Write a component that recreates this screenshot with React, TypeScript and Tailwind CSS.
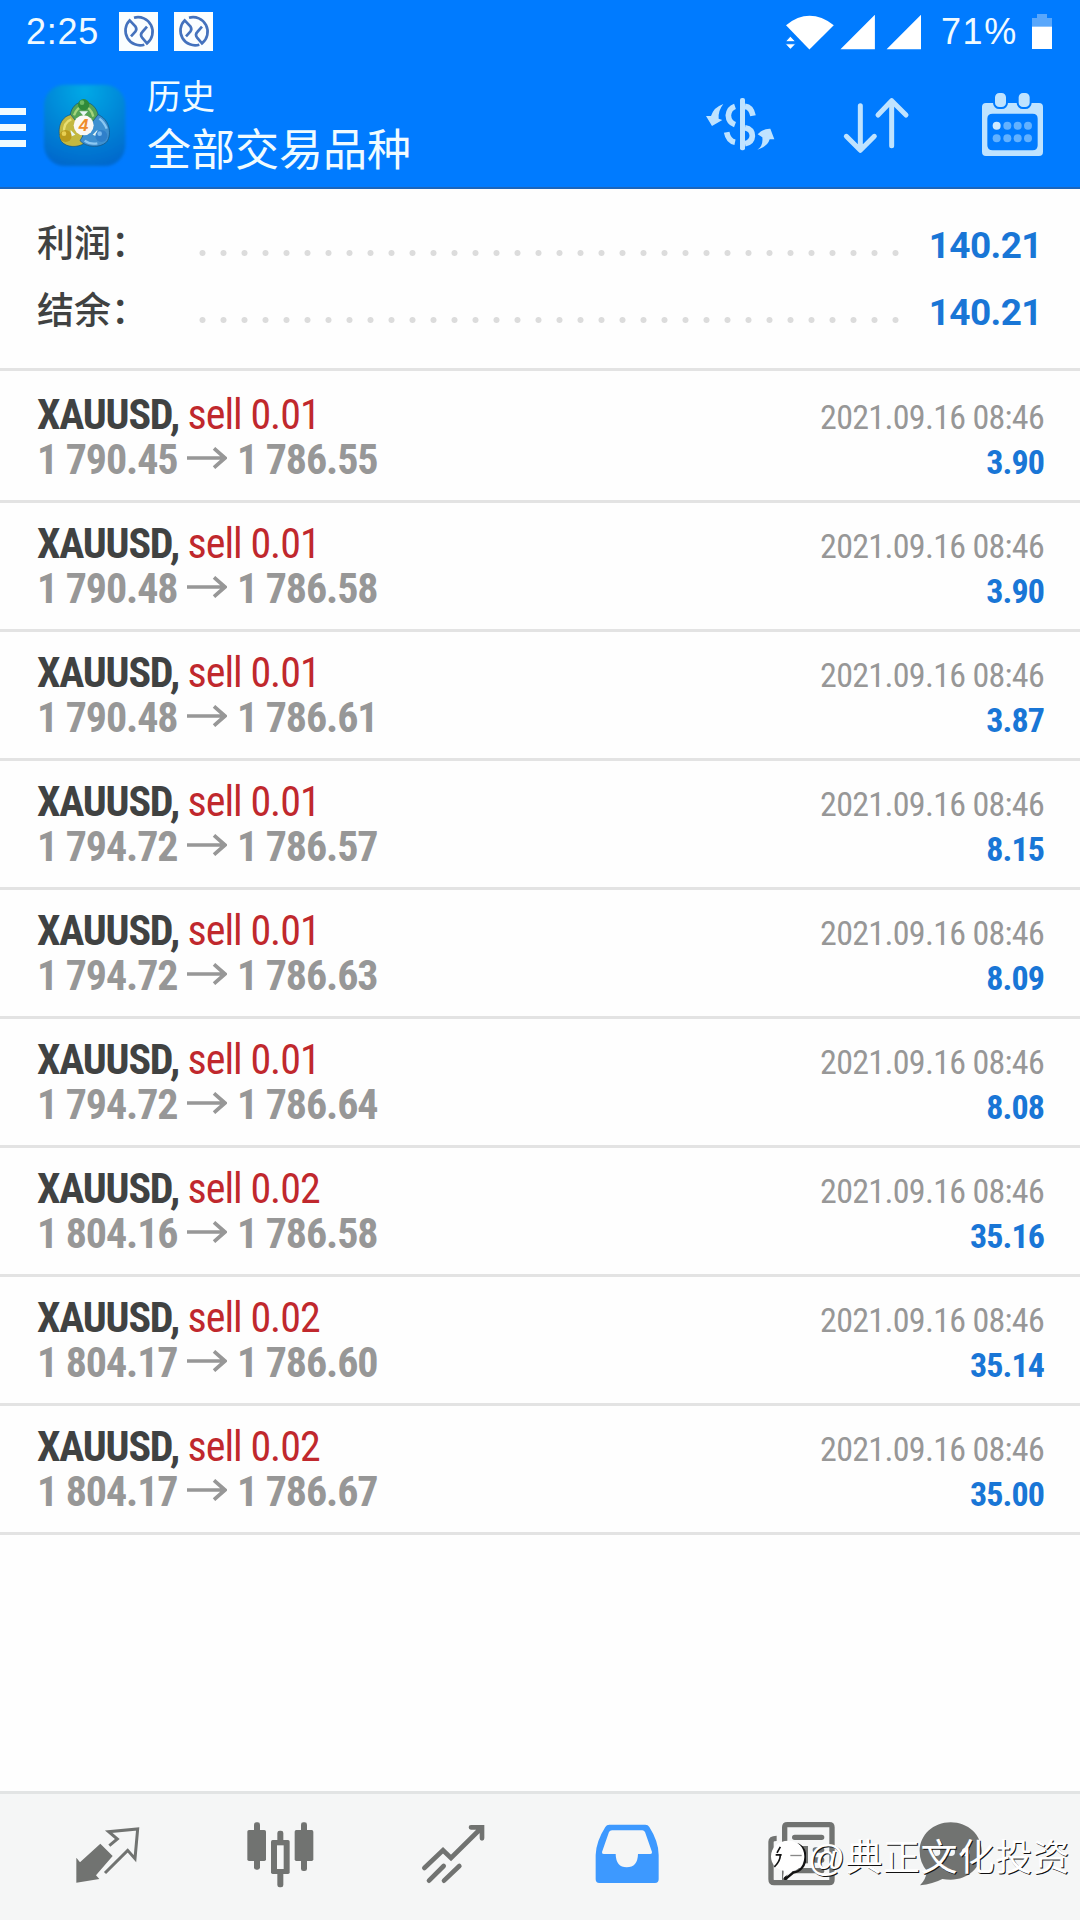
const deals = [
  { volume: '0.01', open: '1 790.45', close: '1 786.55', profit: '3.90' },
  { volume: '0.01', open: '1 790.48', close: '1 786.58', profit: '3.90' },
  { volume: '0.01', open: '1 790.48', close: '1 786.61', profit: '3.87' },
  { volume: '0.01', open: '1 794.72', close: '1 786.57', profit: '8.15' },
  { volume: '0.01', open: '1 794.72', close: '1 786.63', profit: '8.09' },
  { volume: '0.01', open: '1 794.72', close: '1 786.64', profit: '8.08' },
  { volume: '0.02', open: '1 804.16', close: '1 786.58', profit: '35.16' },
  { volume: '0.02', open: '1 804.17', close: '1 786.60', profit: '35.14' },
  { volume: '0.02', open: '1 804.17', close: '1 786.67', profit: '35.00' },
];

function NotificationIcon() {
  return (
    <svg viewBox="0 0 117 117" className="size-[39px]">
      <rect width="117" height="117" fill="#fafeff" />
      <g fill="none" stroke="#4472bd" strokeWidth="8">
        <path d="M45 17 A44 44 0 0 1 84 94 L70 78 Q62 68 70 60 L84 44" />
        <path d="M76 98 A44 44 0 0 1 32 25 L49 43 Q55 52 49 59 L36 73" />
      </g>
    </svg>
  );
}

function StatusBar() {
  return (
    <div className="flex h-[63px] items-center pl-[26px] pr-[28px] font-['Liberation_Sans',sans-serif] text-[36px] text-[#f0faff]">
      <span className="mt-px w-[93px] tracking-[0.7px]">2:25</span>
      <div className="flex gap-4">
        <NotificationIcon />
        <NotificationIcon />
      </div>
      <svg viewBox="315 30 410 125" className="ml-auto h-[42px] w-[137px]" fill="#fff">
        <path d="M321 72 Q391 16 464 72 L391 145 Z" />
        <path d="M318 122 L334 104 L351 122 Z M318 128 L334 145 L351 128 Z" stroke="#007bff" strokeWidth="3" />
        <path d="M484 144 L587 41 V144 Z M622 144 L725 41 V144 Z" />
      </svg>
      <span className="ml-[20px] mt-px w-[91px] tracking-[1.6px]">71%</span>
      <svg viewBox="0 0 60 105" className="h-[35px] w-5">
        <path d="M0 12 H15 V0 H45 V12 H60 V40 H0 Z" fill="#59a7fb" />
        <rect y="38" width="60" height="67" fill="#fff" />
      </svg>
    </div>
  );
}

function AppLogo() {
  return (
    <svg viewBox="0 0 270 270" className="h-[90px] w-[90px]">
      <defs>
        <radialGradient id="tile" cx="50%" cy="8%" r="95%">
          <stop offset="0" stopColor="#04a9e6" />
          <stop offset="0.5" stopColor="#0488d8" />
          <stop offset="1" stopColor="#0268cc" />
        </radialGradient>
        <filter id="soft"><feGaussianBlur stdDeviation="5" /></filter>
      </defs>
      <rect x="12" y="14" width="244" height="244" rx="62" fill="url(#tile)" filter="url(#soft)" />
      <g stroke="#12507c" strokeWidth="2">
        <path d="M131 66 C98 66 84 100 92 134 L131 146 L174 134 C182 100 164 66 131 66 Z" fill="#55a355" />
        <path d="M92 104 C58 112 50 154 64 184 C80 204 112 202 130 192 L126 146 Z" fill="#c3b840" />
        <path d="M174 104 C206 116 218 160 200 186 C178 206 138 202 120 182 L140 148 Z" fill="#3f90d0" />
      </g>
      <path d="M102 106 Q112 80 131 80 Q152 80 160 110" fill="none" stroke="#a4d47c" strokeWidth="7" />
      <path d="M72 160 Q70 126 94 118" fill="none" stroke="#e9df72" strokeWidth="7" />
      <path d="M200 146 Q192 126 178 116 M134 182 Q150 194 172 190" fill="none" stroke="#8cc8f2" strokeWidth="7" />
      <path d="M118 94 L144 94 L131 108 Z M92 150 L106 164 L92 170 Z M172 150 L158 164 L172 170 Z" fill="#e8f6f4" />
      <circle cx="131" cy="74" r="17" fill="#2f8a3a" />
      <circle cx="126" cy="68" r="7" fill="#6cba64" />
      <circle cx="77" cy="168" r="18" fill="#b99a1c" />
      <circle cx="72" cy="161" r="7" fill="#e8cf52" />
      <circle cx="184" cy="168" r="18" fill="#2f7fca" />
      <circle cx="179" cy="161" r="7" fill="#78b8ee" />
      <circle cx="131" cy="136" r="30" fill="#fbf8f4" />
      <text x="131" y="154" textAnchor="middle" fontSize="52" fontWeight="700" fontStyle="italic" fontFamily="Liberation Sans, sans-serif" fill="#ef8c2c">4</text>
    </svg>
  );
}

function CurrencyIcon() {
  return (
    <svg viewBox="0 0 270 240" className="h-20 w-[90px]" fill="#bfe3ff">
      <rect x="120" y="39" width="15" height="157" rx="6" />
      <g fill="none" stroke="#bfe3ff" strokeWidth="17">
        <path d="M105 64 Q87 70 85 91 Q86 112 105 119" />
        <path d="M135 64 Q154 66 159 92" />
        <path d="M80 142 Q85 168 105 172" />
        <path d="M135 128 Q157 132 157 153 Q156 172 135 176" />
      </g>
      <path d="M18 93 L33 93 Q42 66 70 57 Q54 77 56 101 L67 105 L36 123 Z" />
      <path d="M172 194 Q190 183 187 157 L173 148 Q190 130 211 131 L223 163 L209 163 Q203 185 172 194 Z" />
    </svg>
  );
}

function SortIcon() {
  return (
    <svg viewBox="480 255 216 240" className="h-20 w-[72px]" fill="none" stroke="#bfe3ff" strokeWidth="15" strokeLinecap="round" strokeLinejoin="round">
      <path d="M541 317 V450 M499 409 L541 451 L583 409" />
      <path d="M635 437 V302 M594 345 L635 302 L678 345" />
    </svg>
  );
}

function CalendarIcon() {
  return (
    <svg viewBox="894 255 213 240" className="h-20 w-[71px]">
      <path fillRule="evenodd" fill="#bfe3ff" d="M918 309 H1077 Q1089 309 1089 321 V455 Q1089 468 1077 468 H918 Q906 468 906 455 V321 Q906 309 918 309 Z M938 341 Q922 341 922 356 V436 Q922 451 938 451 H1058 Q1073 451 1073 436 V356 Q1073 341 1058 341 Z" />
      <g fill="#bfe3ff" stroke="#007bff" strokeWidth="6">
        <rect x="942" y="276" width="39" height="48" rx="16" />
        <rect x="1013" y="276" width="39" height="48" rx="16" />
      </g>
      <circle cx="950" cy="377" r="12" fill="#cfeaff" />
      <g fill="#62b1ff">
        <circle cx="982" cy="377" r="12" />
        <circle cx="1013" cy="377" r="12" />
        <circle cx="1044" cy="377" r="12" />
        <circle cx="950" cy="415" r="12" />
        <circle cx="982" cy="415" r="12" />
        <circle cx="1013" cy="415" r="12" />
        <circle cx="1044" cy="415" r="12" />
      </g>
    </svg>
  );
}

function Header() {
  return (
    <header className="h-[189px] border-b-2 border-[#1b66bd] bg-[#007bff]">
      <StatusBar />
      <div className="flex h-[124px] items-center">
        <div className="mt-[5px] flex w-[26px] flex-col gap-[9px]">
          <div className="h-[7px] bg-[#f0fbff]" />
          <div className="h-[7px] bg-[#f0fbff]" />
          <div className="h-[7px] bg-[#f0fbff]" />
        </div>
        <div className="ml-[14px]">
          <AppLogo />
        </div>
        <div className="ml-[17px] pb-[3px] font-['Noto_Sans_CJK_SC',sans-serif] text-[#f0fbff]">
          <p className="text-[34px] leading-[47px]">历史</p>
          <p className="text-[44px] leading-[58px]">全部交易品种</p>
        </div>
        <div className="ml-auto flex pr-[31px]">
          <CurrencyIcon />
          <div className="ml-[50px]">
            <SortIcon />
          </div>
          <div className="ml-[66px]">
            <CalendarIcon />
          </div>
        </div>
      </div>
    </header>
  );
}

function SummaryRow({ label, value }: { label: string; value: string }) {
  return (
    <div className="flex h-[67px] items-center pl-[37px] pr-[38px]">
      <span className="w-[155px] pb-[5px] font-['Noto_Sans_CJK_SC',sans-serif] text-[37px] font-medium text-[#404242]">{label}</span>
      <div className="mt-[16px] h-2 w-[709px] bg-[radial-gradient(circle,#dcdcdc_2.5px,transparent_3.5px)] bg-[length:21px_8px]" />
      <span className="ml-auto mt-[2px] text-[37px] font-bold tracking-[-0.6px] text-[#1976d6]">{value}</span>
    </div>
  );
}

function DealRow({ deal }: { deal: (typeof deals)[number] }) {
  return (
    <li className="flex h-[129px] flex-col justify-end border-b-[3px] border-[#e3e3e3] pb-[18px] pl-[37px] pr-[36px] font-['Roboto_Condensed',Roboto,sans-serif] text-[42px] leading-[45px] first:h-[132px]">
      <div className="flex h-[45px] items-baseline justify-between">
        <p className="tracking-[-1px] text-[#c0282d]">
          <span className="font-bold tracking-[-1.2px] text-[#404242]">XAUUSD,</span> sell {deal.volume}
        </p>
        <p className="text-[34px] tracking-[-0.7px] text-[#979797]">2021.09.16 08:46</p>
      </div>
      <div className="flex h-[45px] items-baseline justify-between font-bold">
        <p className="flex items-baseline tracking-[-1.1px] text-[#979797]">
          <span className="w-[150px]">{deal.open}</span>
          <svg viewBox="0 0 120 66" className="mr-[10px] h-[22px] w-10 -translate-y-[5px]" fill="none" stroke="#979797" strokeWidth="11">
            <path d="M0 33 H114 M81 4 L114 33 L81 62" />
          </svg>
          <span>{deal.close}</span>
        </p>
        <p className="text-[34px] tracking-[-0.9px] text-[#1976d6]">{deal.profit}</p>
      </div>
    </li>
  );
}

function NavBar() {
  return (
    <nav className="flex h-[129px] border-t-[3px] border-[#e2e4e4] bg-[#f5f6f6] pl-[21px] pt-[26px]">
      <svg viewBox="64 120 519 210" className="h-[70px] w-[173px] shrink-0" fill="#717371">
        <path d="M230 233 L241 247 L302 191 L339 228 L289 286 L299 297 L230 308 Z" />
        <path d="M329 197 L353 177 L327 155 L414 147 L406 236 L384 211 L316 279" fill="none" stroke="#717371" strokeWidth="9" />
      </svg>
      <svg viewBox="581 120 519 210" className="h-[70px] w-[173px] shrink-0" fill="#717371">
        <rect x="761" y="127" width="18" height="142" rx="7" />
        <rect x="741" y="150" width="56" height="93" rx="5" />
        <rect x="902" y="127" width="18" height="146" rx="7" />
        <rect x="883" y="150" width="56" height="93" rx="5" />
        <rect x="831" y="152" width="18" height="170" rx="7" />
        <rect x="812" y="180" width="56" height="102" rx="5" />
        <rect x="830" y="196" width="20" height="71" fill="#f5f6f6" />
      </svg>
      <svg viewBox="21 120 519 210" className="h-[70px] w-[173px] shrink-0" fill="none" stroke="#717371" strokeWidth="14" strokeLinecap="round">
        <path d="M193 264 L249 211 L273 234 L364 144 M333 142 H366 V175" />
        <path d="M207 302 L251 258 M252 302 L298 258" />
      </svg>
      <svg viewBox="540 120 519 210" className="h-[70px] w-[173px] shrink-0">
        <path fillRule="evenodd" fill="#3d99ff" d="M748 134 H856 Q864 134 868 141 Q896 185 896 225 V298 Q896 309 885 309 H718 Q707 309 707 298 V225 Q708 185 736 141 Q740 134 748 134 Z M756 151 Q750 151 747 156 L726 216 Q725 222 731 222 H767 Q768 262 800 262 Q833 262 834 222 H871 Q877 222 876 216 L855 156 Q852 151 847 151 Z" />
      </svg>
      <svg viewBox="-21 120 519 210" className="h-[70px] w-[173px] shrink-0" fill="none" stroke="#717371" strokeWidth="16">
        <path d="M194 300 V142 Q194 134 202 134 H328 Q336 134 336 142 V300 Q336 308 328 308 H162 Q153 308 153 298 V185 Q153 175 170 175" />
        <path d="M224 172 H305 M286 210 H305 M286 240 H305 M224 272 H305" strokeLinecap="round" />
        <rect x="226" y="206" width="30" height="36" fill="#717371" />
      </svg>
      <svg viewBox="499 120 390 210" className="h-[70px] w-[130px] shrink-0" fill="#717371">
        <path d="M693 127 C745 127 786 165 786 213 C786 262 745 299 693 299 Q680 299 668 297 Q640 312 601 316 Q619 298 622 273 Q600 248 600 213 C600 165 641 127 693 127 Z" />
        <g fill="#f5f6f6">
          <circle cx="650" cy="216" r="12" />
          <circle cx="694" cy="216" r="12" />
          <circle cx="738" cy="216" r="12" />
        </g>
      </svg>
    </nav>
  );
}

function Watermark() {
  return (
    <div className="absolute bottom-[38px] right-[10px] flex items-center text-white">
      <svg viewBox="0 0 105 125" className="h-[42px] w-[35px]">
        <path d="M66 14 C88 14 100 32 100 55 C100 80 84 98 64 100 L40 120 L38 100" fill="none" stroke="#111" strokeWidth="7" transform="translate(3 3)" />
        <path d="M52 8 C82 8 100 28 100 55 C100 82 80 98 60 100 L36 120 L38 98 C16 94 0 78 0 55 C0 28 22 8 52 8 Z" fill="#fff" />
        <path d="M28 26 L18 44 M14 50 H32 M28 50 Q28 70 10 86" fill="none" stroke="#111" strokeWidth="5" />
        <path d="M58 52 H92" fill="none" stroke="#888" strokeWidth="4" />
      </svg>
      <span className="ml-[2px] font-['Liberation_Sans','Noto_Sans_CJK_SC',sans-serif] text-[37px] leading-[46px] tracking-[0.4px] [text-shadow:1px_1px_0_#111]">
        @典正文化投资
      </span>
    </div>
  );
}

export default function App() {
  return (
    <div className="relative flex h-[1920px] w-[1080px] flex-col overflow-hidden bg-[#fefefe] font-['Roboto',sans-serif]">
      <Header />
      <section className="h-[182px] border-b-[3px] border-[#e3e3e3] pt-[22px]">
        <SummaryRow label="利润：" value="140.21" />
        <SummaryRow label="结余：" value="140.21" />
      </section>
      <ul className="grow">
        {deals.map((deal, i) => (
          <DealRow key={i} deal={deal} />
        ))}
      </ul>
      <NavBar />
      <Watermark />
    </div>
  );
}
